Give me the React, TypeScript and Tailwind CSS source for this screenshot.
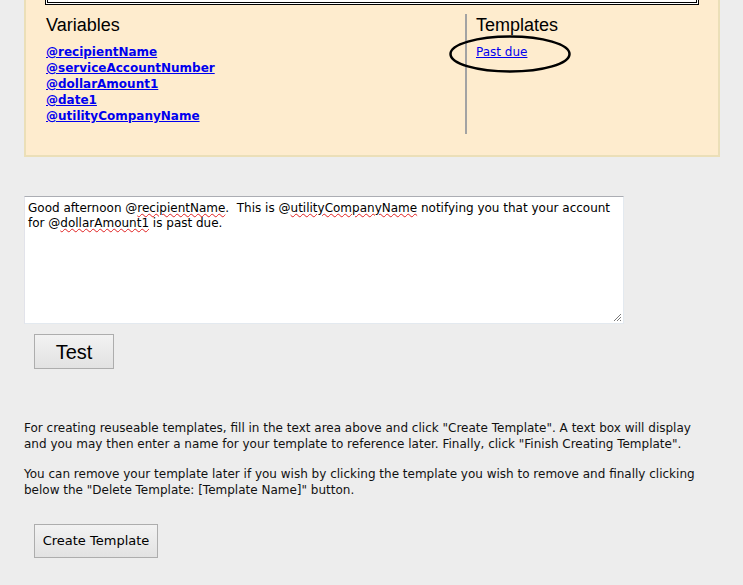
import React from "react";

const verdana = { fontFamily: '"DejaVu Sans", Verdana, sans-serif' };

function Wavy({ children }: { children: React.ReactNode }) {
  return (
    <span className="underline decoration-wavy decoration-[#e02020] decoration-1 underline-offset-[1px]">
      {children}
    </span>
  );
}

export default function App() {
  const vars = [
    "@recipientName",
    "@serviceAccountNumber",
    "@dollarAmount1",
    "@date1",
    "@utilityCompanyName",
  ];
  return (
    <div className="w-[743px] h-[585px] overflow-hidden bg-[#ededed] text-black">
      {/* cream panel */}
      <div className="ml-[24px] w-[696px] h-[157px] bg-[#feecce] border-l-2 border-r-2 border-b-2 border-[#ebdfb8] flex flex-col">
        <div className="ml-[19px] w-[654px] h-[5px] border-[3px] border-t-0 border-double border-black bg-white" />
        <div className="flex mt-[9px]">
          <div className="w-[439px] pl-[20px] pt-[1px]">
            <div className="text-[18px] leading-[20px]" style={{ fontFamily: '"Liberation Sans", Arial, sans-serif' }}>
              Variables
            </div>
            <div className="mt-[9px] flex flex-col text-[12px] leading-[16px] font-bold" style={verdana}>
              {vars.map((v) => (
                <a key={v} href="#" className="text-[#0000ee] underline w-fit">
                  {v}
                </a>
              ))}
            </div>
          </div>
          <div className="w-[2px] h-[120px] bg-[#a3a3a3]" />
          <div className="pl-[9px] pt-[1px] relative">
            <div className="text-[18px] leading-[20px]" style={{ fontFamily: '"Liberation Sans", Arial, sans-serif' }}>
              Templates
            </div>
            <a href="#" className="block mt-[9px] text-[12px] leading-[16px] text-[#0000ee] underline w-fit" style={verdana}>
              Past due
            </a>
            <svg className="absolute left-[-18px] top-[21px]" width="124" height="40" viewBox="0 0 124 40">
              <ellipse cx="61" cy="19" rx="59.5" ry="17.5" fill="none" stroke="#000" strokeWidth="2.5" />
            </svg>
          </div>
        </div>
      </div>

      {/* textarea */}
      <div
        className="relative ml-[24px] mt-[39px] w-[600px] h-[128px] bg-white border border-[#abadb3] border-b-[#e3e9ef] border-r-[#e3e9ef] border-l-[#e2e3ea] pl-[3px] pt-[4px] pr-[6px] text-[12px] leading-[15px] text-[#000]"
        style={verdana}
      >
        Good afternoon @<Wavy>recipientName</Wavy>.&nbsp; This is @<Wavy>utilityCompanyName</Wavy> notifying you that your account for @<Wavy>dollarAmount1</Wavy> is past due.
        <svg className="absolute right-[1px] bottom-[1px]" width="10" height="10" viewBox="0 0 10 10">
          <path d="M9 2 L2 9 M9 5 L5 9 M9 8 L8 9" stroke="#7a7a7a" strokeWidth="1" />
        </svg>
      </div>

      {/* Test button */}
      <button
        className="ml-[34px] mt-[10px] w-[80px] h-[35px] border border-[#adadad] bg-gradient-to-b from-[#f2f2f2] to-[#e2e2e2] text-[20px] leading-[20px] text-black"
        style={{ fontFamily: '"Liberation Sans", Arial, sans-serif' }}
      >
        Test
      </button>

      {/* paragraphs */}
      <div className="ml-[24px] mt-[51px] w-[690px] text-[12px] leading-[16px] text-[#111]" style={verdana}>
        <p className="mb-[14px]">
          For creating reuseable templates, fill in the text area above and click "Create Template". A text box will display and you may then enter a name for your template to reference later. Finally, click "Finish Creating Template".
        </p>
        <p>
          You can remove your template later if you wish by clicking the template you wish to remove and finally clicking below the "Delete Template: [Template Name]" button.
        </p>
      </div>

      <button
        className="ml-[34px] mt-[26px] w-[124px] h-[34px] border border-[#adadad] bg-gradient-to-b from-[#f2f2f2] to-[#e2e2e2] text-[13px] leading-[16px] text-black"
        style={verdana}
      >
        Create Template
      </button>
    </div>
  );
}
